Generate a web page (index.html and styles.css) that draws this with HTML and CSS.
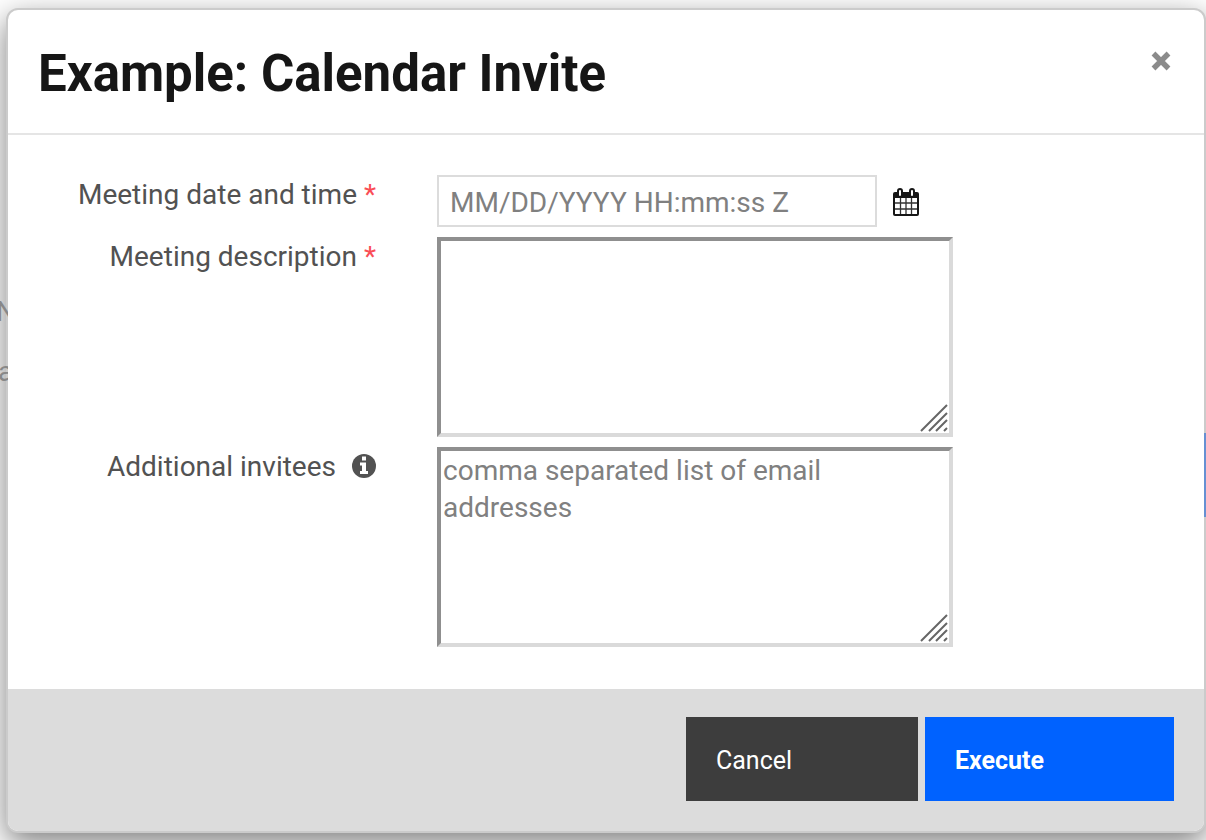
FILE: index.html
```html
<!DOCTYPE html>
<html lang="en">
<head>
<meta charset="utf-8">
<title>Example: Calendar Invite</title>
<link rel="stylesheet" href="styles.css">
</head>
<body>
<div class="behind" aria-hidden="true">
  <span class="behind-text behind-name">N</span>
  <span class="behind-text behind-action">a</span>
</div>
<form class="modal" role="dialog" aria-labelledby="modal-title">
  <header class="modal-header">
    <h1 class="modal-title" id="modal-title">Example: Calendar Invite</h1>
    <button class="close" type="button" aria-label="Close">
      <svg width="22" height="22" viewBox="0 0 22 22"><path d="M3.500 3.500l15 15M18.500 3.500l-15 15" stroke="#8b8b8b" stroke-width="5.400"/></svg>
    </button>
  </header>
  <div class="modal-body">
    <div class="field">
      <label class="label" for="when">Meeting date and time <span class="required">*</span></label>
      <div class="control date-control">
        <input class="date-input" id="when" type="text" placeholder="MM/DD/YYYY HH:mm:ss Z">
        <button class="calendar" type="button" aria-label="Pick a date">
          <svg width="28" height="30" viewBox="0 0 28 30">
            <path d="M3 4h22a2 2 0 0 1 2 2v20a2 2 0 0 1-2 2H3a2 2 0 0 1-2-2V6a2 2 0 0 1 2-2z" fill="#161616"/>
            <path d="M3 10h22v16H3z" fill="#fff"/>
            <path d="M8.500 10v16M14 10v16M19.500 10v16M3 15h22M3 21h22" stroke="#333" stroke-width="1.300"/>
            <rect x="6" y="1" width="4" height="8" rx="2" fill="#fff" stroke="#161616" stroke-width="2"/>
            <rect x="18" y="1" width="4" height="8" rx="2" fill="#fff" stroke="#161616" stroke-width="2"/>
          </svg>
        </button>
      </div>
    </div>
    <div class="field">
      <label class="label" for="description">Meeting description <span class="required">*</span></label>
      <div class="control area-control">
        <textarea class="area" id="description"></textarea>
        <svg class="grip" width="28" height="28" viewBox="0 0 28 28"><path d="M1 27L27 1M9 27L27 9M16 27L27 16M24 27l3-3" stroke="#666" stroke-width="2"/></svg>
      </div>
    </div>
    <div class="field">
      <div class="label info-label">
        <label for="invitees">Additional invitees</label>
        <svg class="info" width="24" height="24" viewBox="0 0 24 24"><circle cx="12" cy="12" r="12" fill="#525252"/><path d="M10 2.500h4v4h-4zM8 8.500h6v8.500h2v3H8v-3h2v-5.500H8z" fill="#fff"/></svg>
      </div>
      <div class="control area-control">
        <textarea class="area" id="invitees" placeholder="comma separated list of email addresses"></textarea>
        <svg class="grip" width="28" height="28" viewBox="0 0 28 28"><path d="M1 27L27 1M9 27L27 9M16 27L27 16M24 27l3-3" stroke="#666" stroke-width="2"/></svg>
      </div>
    </div>
  </div>
  <footer class="modal-footer">
    <button class="button cancel" type="button">Cancel</button>
    <button class="button execute" type="submit">Execute</button>
  </footer>
</form>
</body>
</html>
```
FILE: styles.css
```css
* { box-sizing: border-box; }
body {
  margin: 0;
  padding: 8px 0 0 6px;
  min-height: 100vh;
  overflow: hidden;
  background: #fff;
  color: #525252;
  font: 28px/40px Roboto, "Liberation Sans", sans-serif;
}
button, input, textarea { font: inherit; margin: 0; }
.behind-text { position: absolute; z-index: 1; overflow: hidden; color: #888; }
.behind-name { top: 292px; left: -4px; width: 12px; }
.behind-action { top: 352px; left: -2px; width: 10px; }
.modal {
  position: relative;
  border: 2px solid #cbcbcb;
  border-radius: 12px;
  background: #fff;
  box-shadow: 0 10px 30px rgba(0, 0, 0, 0.5);
}
.modal::after {
  content: "";
  position: absolute;
  top: 423px;
  right: -2px;
  width: 2px;
  height: 84px;
  background: #6690d2;
}
.modal-header {
  display: flex;
  justify-content: space-between;
  align-items: flex-start;
  padding: 34px 32px 29px 30px;
  border-bottom: 2px solid #e5e5e5;
}
.modal-title { margin: 0; color: #161616; font-size: 51px; line-height: 60px; font-weight: 700; }
.close { display: flex; margin-top: 6px; padding: 0; border: 0; background: none; }
.modal-body { display: flex; flex-direction: column; gap: 10px; padding: 40px 30px 42px; }
.field { display: flex; gap: 61px; }
.label { width: 338px; text-align: right; white-space: nowrap; }
.required { color: #fa4d56; }
.info-label { display: flex; justify-content: flex-end; gap: 16px; }
.info { margin-top: 7px; }
.control { position: relative; display: flex; align-items: center; }
.date-input {
  width: 440px;
  height: 52px;
  padding: 2px 11px 0;
  border: 2px solid #dcdcdc;
  background: #fff;
}
.date-control { gap: 15px; }
.calendar { display: flex; padding: 3px 0 0; border: 0; background: none; }
.area-control { width: 516px; }
.area {
  width: 100%;
  height: 200px;
  padding: 1px 2px;
  border: 4px solid;
  border-color: #8f8f8f #dadada #dadada #8f8f8f;
  background: #fff;
  line-height: 37px;
  resize: none;
}
.grip { position: absolute; right: 5px; bottom: 5px; fill: none; pointer-events: none; }
::placeholder { color: #808080; opacity: 1; }
.modal-footer {
  display: flex;
  justify-content: flex-end;
  gap: 7px;
  padding: 28px 30px 30px;
  border-radius: 0 0 10px 10px;
  background: #dcdcdc;
}
.button { height: 84px; padding: 4px 30px 0; border: 0; color: #fff; font-size: 25px; text-align: left; }
.cancel { width: 232px; background: #3d3d3d; }
.execute { width: 249px; background: #0062ff; font-weight: 700; }
```
